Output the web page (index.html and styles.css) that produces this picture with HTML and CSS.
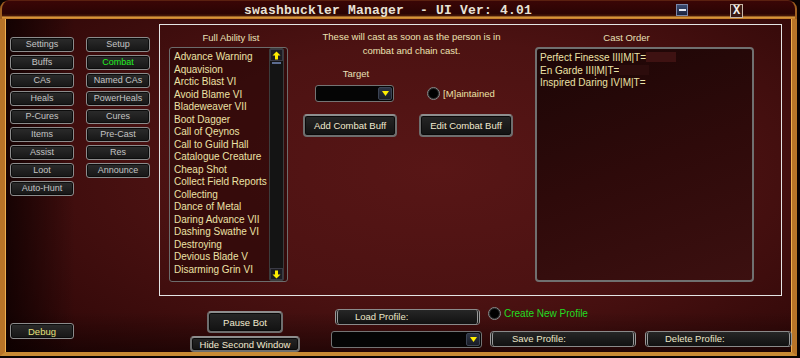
FILE: index.html
```html
<!DOCTYPE html>
<html>
<head>
<meta charset="utf-8">
<link rel="stylesheet" href="styles.css">
</head>
<body>
<div class="window">
  <div class="titlebar">
    <span class="title">swashbuckler Manager  - UI Ver: 4.01</span>
    <span class="tb-min"><span class="dash"></span></span>
    <span class="tb-close">X</span>
  </div>
  <div class="frame">
    <aside class="sidebar">
      <div class="navgrid">
        <button class="nav">Settings</button>
        <button class="nav">Setup</button>
        <button class="nav">Buffs</button>
        <button class="nav active">Combat</button>
        <button class="nav">CAs</button>
        <button class="nav">Named CAs</button>
        <button class="nav">Heals</button>
        <button class="nav">PowerHeals</button>
        <button class="nav">P-Cures</button>
        <button class="nav">Cures</button>
        <button class="nav">Items</button>
        <button class="nav">Pre-Cast</button>
        <button class="nav">Assist</button>
        <button class="nav">Res</button>
        <button class="nav">Loot</button>
        <button class="nav">Announce</button>
        <button class="nav">Auto-Hunt</button>
      </div>
      <button class="nav debug">Debug</button>
    </aside>
    <section class="main">
      <div class="panel">
        <div class="col-ability">
          <div class="label">Full Ability list</div>
          <div class="listbox">
            <ul class="items">
              <li>Advance Warning</li>
              <li>Aquavision</li>
              <li>Arctic Blast VI</li>
              <li>Avoid Blame VI</li>
              <li>Bladeweaver VII</li>
              <li>Boot Dagger</li>
              <li>Call of Qeynos</li>
              <li>Call to Guild Hall</li>
              <li>Catalogue Creature</li>
              <li>Cheap Shot</li>
              <li>Collect Field Reports</li>
              <li>Collecting</li>
              <li>Dance of Metal</li>
              <li>Daring Advance VII</li>
              <li>Dashing Swathe VI</li>
              <li>Destroying</li>
              <li>Devious Blade V</li>
              <li>Disarming Grin VI</li>
            </ul>
            <div class="scrollbar">
              <span class="sb-btn"><svg width="9" height="9" viewBox="0 0 9 9"><path d="M4.5 0.5 L8.5 4.5 L6 4.5 L6 8.5 L3 8.5 L3 4.5 L0.5 4.5 Z" fill="#ffee00"/></svg></span>
              <span class="thumb"></span>
              <span class="track"></span>
              <span class="sb-btn"><svg width="9" height="9" viewBox="0 0 9 9"><path d="M4.5 8.5 L8.5 4.5 L6 4.5 L6 0.5 L3 0.5 L3 4.5 L0.5 4.5 Z" fill="#ffee00"/></svg></span>
            </div>
          </div>
        </div>
        <div class="col-mid">
          <p class="note">These will cast as soon as the person is in<br>combat and chain cast.</p>
          <div class="target-row">
            <div class="target">
              <div class="label">Target</div>
              <div class="dropdown small"><span class="dd-btn"><svg width="7" height="5" viewBox="0 0 7 5"><path d="M0 0 H7 L3.5 5 Z" fill="#ffee00"/></svg></span></div>
            </div>
            <label class="radio"><span class="dot"></span>[M]aintained</label>
          </div>
          <div class="btn-row">
            <button class="btn">Add Combat Buff</button>
            <button class="btn">Edit Combat Buff</button>
          </div>
        </div>
        <div class="col-cast">
          <div class="label cast-label">Cast Order</div>
          <div class="castbox">
            <div>Perfect Finesse III|M|T=<span class="redact"></span></div>
            <div>En Garde III|M|T=<span class="redact faint"></span></div>
            <div>Inspired Daring IV|M|T=</div>
          </div>
        </div>
      </div>
      <div class="bottom">
        <div class="bcol bcol-a">
          <button class="btn pause">Pause Bot</button>
          <button class="btn hide">Hide Second Window</button>
        </div>
        <div class="bcol bcol-b">
          <button class="pbtn load">Load Profile:</button>
          <div class="dropdown wide"><span class="dd-btn"><svg width="7" height="5" viewBox="0 0 7 5"><path d="M0 0 H7 L3.5 5 Z" fill="#ffee00"/></svg></span></div>
        </div>
        <div class="bcol bcol-c">
          <label class="radio green"><span class="dot"></span>Create New Profile</label>
          <button class="pbtn save">Save Profile:</button>
        </div>
        <div class="bcol bcol-d">
          <button class="pbtn del">Delete Profile:</button>
        </div>
      </div>
    </section>
  </div>
</div>
</body>
</html>
```

FILE: styles.css
```css
* { box-sizing: border-box; }
html, body { margin: 0; padding: 0; }
body {
  width: 800px;
  height: 358px;
  background: #0a0302;
  font-family: "Liberation Sans", Arial, sans-serif;
  overflow: hidden;
}
button { font-family: inherit; cursor: default; padding: 0; }

.window {
  width: 797px;
  height: 356px;
  display: flex;
  flex-direction: column;
}

.titlebar {
  height: 20px;
  display: flex;
  align-items: flex-start;
  background: linear-gradient(#3a0606, #2a0404 70%, #4a1a08 84%, #e0a040 88%, #c07828 100%);
  border-radius: 9px 9px 0 0;
  border-left: 2px solid #a06020;
  border-right: 2px solid #a06020;
  border-top: 1px solid #5a2010;
  padding-left: 242px;
}
.title {
  white-space: pre;
  font-family: "Liberation Mono", "DejaVu Sans Mono", monospace;
  font-weight: bold;
  font-size: 13px;
  line-height: 13px;
  margin-top: 3px;
  color: #e8e2d6;
  letter-spacing: 0.2px;
}
.tb-min {
  margin-left: 144px;
  margin-top: 3px;
  width: 12px;
  height: 12px;
  background: linear-gradient(#3a4a70, #1a2440);
  border: 1px solid #7a86a8;
  display: flex;
  align-items: center;
  justify-content: center;
}
.tb-min .dash { width: 7px; height: 2px; background: #e8ecf4; }
.tb-close {
  margin-left: 42px;
  margin-top: 3px;
  width: 13px;
  height: 14px;
  background: #3a1a14;
  border: 1px solid #c8b8a8;
  color: #f4f0ec;
  font-family: "Liberation Mono", monospace;
  font-weight: bold;
  font-size: 12px;
  line-height: 12px;
  text-align: center;
}

.frame {
  flex: 1;
  display: flex;
  border-left: 5px solid #b87428;
  border-right: 5px solid #b87428;
  border-bottom: 4px solid #c88a34;
  box-shadow: inset 1px 0 0 #f0b050, inset -1px 0 0 #f0b050;
  background:
    linear-gradient(90deg, rgba(10,0,0,0.75) 0px, rgba(10,0,0,0) 70px),
    linear-gradient(0deg, rgba(10,0,0,0.5) 0px, rgba(10,0,0,0) 40px),
    radial-gradient(ellipse 75% 85% at 55% 45%, #581616 0%, #4c1212 45%, #360a0a 80%, #260505 100%);
}

/* Sidebar */
.sidebar {
  width: 155px;
  padding: 18px 0 13px 5px;
  display: flex;
  flex-direction: column;
}
.navgrid {
  display: grid;
  grid-template-columns: 64px 64px;
  grid-auto-rows: 15px;
  column-gap: 12px;
  row-gap: 3px;
}
.nav {
  width: 64px;
  height: 15px;
  background: linear-gradient(#2c2c2c, #161616);
  border: 1px solid #8c8c8c;
  border-radius: 3px;
  box-shadow: inset 0 0 0 1px #0c0c0c;
  color: #c4c4c4;
  font-size: 9px;
  line-height: 13px;
  text-align: center;
}
.nav.active { color: #22f022; }
.nav.debug {
  margin-top: auto;
  height: 16px;
  color: #e6e07a;
  font-size: 9.5px;
}

/* Main */
.main {
  display: flex;
  flex-direction: column;
}
.panel {
  margin-top: 5px;
  width: 623px;
  height: 272px;
  border: 1px solid #e4e4e4;
  display: flex;
}
.label {
  color: #e8e0b8;
  font-size: 9.5px;
  line-height: 13px;
  text-align: center;
}
.col-ability {
  margin-left: 9px;
  width: 119px;
  padding-top: 6px;
}
.col-ability .label { margin-bottom: 3px; padding-left: 5px; }
.listbox {
  height: 235px;
  border: 1px solid #6c6c6c;
  border-radius: 3px;
  background: rgba(34, 6, 6, 0.55);
  display: flex;
  padding-right: 3px;
}
.items {
  list-style: none;
  margin: 0;
  padding: 3px 0 0 4px;
  flex: 1;
  overflow: hidden;
  white-space: nowrap;
}
.items li {
  color: #ece2a6;
  font-size: 10px;
  line-height: 12.5px;
  height: 12.5px;
}
.scrollbar {
  width: 15px;
  display: flex;
  flex-direction: column;
  background: #141414;
  border: 1px solid #3c3c3c;
  border-radius: 2px;
}
.sb-btn {
  height: 12px;
  display: flex;
  align-items: center;
  justify-content: center;
  background: #1c1c22;
  border: 1px solid #3a3a44;
}
.thumb {
  margin: 1px 2px 0;
  height: 2px;
  background: #5c6c90;
}
.track { flex: 1; }

.col-mid {
  width: 247px;
  display: flex;
  flex-direction: column;
}
.note {
  margin: 5px 0 0;
  color: #ece2b2;
  font-size: 9.5px;
  line-height: 14px;
  text-align: center;
}
.target-row {
  display: flex;
  align-items: flex-end;
  margin-top: 9px;
  padding-left: 27px;
}
.target { display: flex; flex-direction: column; align-items: center; }
.target .label { margin-bottom: 5px; padding-left: 3px; }
.dropdown {
  height: 17px;
  background: #050505;
  border: 1px solid #747474;
  border-radius: 3px;
  display: flex;
  justify-content: flex-end;
  padding: 1px;
}
.dropdown.small { width: 79px; }
.dd-btn {
  width: 14px;
  background: linear-gradient(#2c3444, #181c26);
  border-radius: 2px;
  border: 1px solid #3c4454;
  display: flex;
  align-items: center;
  justify-content: center;
}
.radio {
  display: flex;
  align-items: center;
  color: #ece2a6;
  font-size: 9.5px;
  line-height: 13px;
}
.target-row .radio { margin-left: 33px; margin-bottom: 2px; }
.dot {
  width: 13px;
  height: 13px;
  border-radius: 50%;
  background: #000;
  border: 1px solid #8a8a8a;
  box-shadow: inset 0 0 0 1px #2a2a2a;
  margin-right: 3px;
}
.btn-row {
  display: flex;
  gap: 22px;
  margin-top: 12px;
  padding-left: 15px;
}
.btn {
  width: 94px;
  height: 23px;
  background: linear-gradient(#262626, #121212);
  border: 2px solid #6e6e6e;
  border-top-color: #8e8e8e;
  border-radius: 4px;
  box-shadow: inset 0 0 0 1px #0a0a0a;
  color: #f2ead0;
  font-size: 9.5px;
  text-align: center;
}

.col-cast {
  width: 219px;
  padding-top: 6px;
}
.cast-label { padding-right: 36px; margin-bottom: 3px; }
.castbox {
  height: 235px;
  border: 2px solid #707070;
  border-radius: 4px;
  background: linear-gradient(160deg, #1c0606 0%, #2e0a0a 50%, #3c1010 100%);
  padding: 3px 0 0 3px;
  color: #ece2a6;
  font-size: 10px;
  line-height: 12.5px;
}
.redact {
  display: inline-block;
  width: 30px;
  height: 10px;
  vertical-align: -1px;
  background: #3e1212;
}
.redact.faint { background: #2c0c0c; }

/* Bottom */
.bottom {
  flex: 1;
  display: flex;
}
.bcol { display: flex; flex-direction: column; }
.bcol-a {
  margin-left: 31px;
  width: 110px;
  align-items: center;
  padding-top: 15px;
  gap: 3px;
}
.btn.pause { width: 76px; height: 22px; }
.btn.hide { width: 110px; height: 16px; line-height: 11px; }
.bcol-b {
  margin-left: 31px;
  width: 151px;
  padding-top: 13px;
  gap: 6px;
}
.pbtn {
  height: 16px;
  background: linear-gradient(#262626, #111);
  border: 1px solid #8a8a8a;
  border-left: 3px double #9a9a9a;
  border-right: 3px double #9a9a9a;
  border-radius: 4px;
  color: #ece6c8;
  font-size: 9.5px;
  line-height: 12px;
  text-align: left;
}
.pbtn.load { width: 145px; margin-left: 4px; padding-left: 17px; }
.dropdown.wide { width: 151px; }
.bcol-c {
  margin-left: 6px;
  width: 148px;
  padding-top: 11px;
  gap: 11px;
}
.radio.green { color: #22dd22; font-size: 10px; }
.pbtn.save { width: 146px; margin-left: 2px; padding-left: 19px; }
.bcol-d {
  margin-left: 9px;
  width: 147px;
  padding-top: 35px;
}
.pbtn.del { width: 147px; padding-left: 17px; }
```
